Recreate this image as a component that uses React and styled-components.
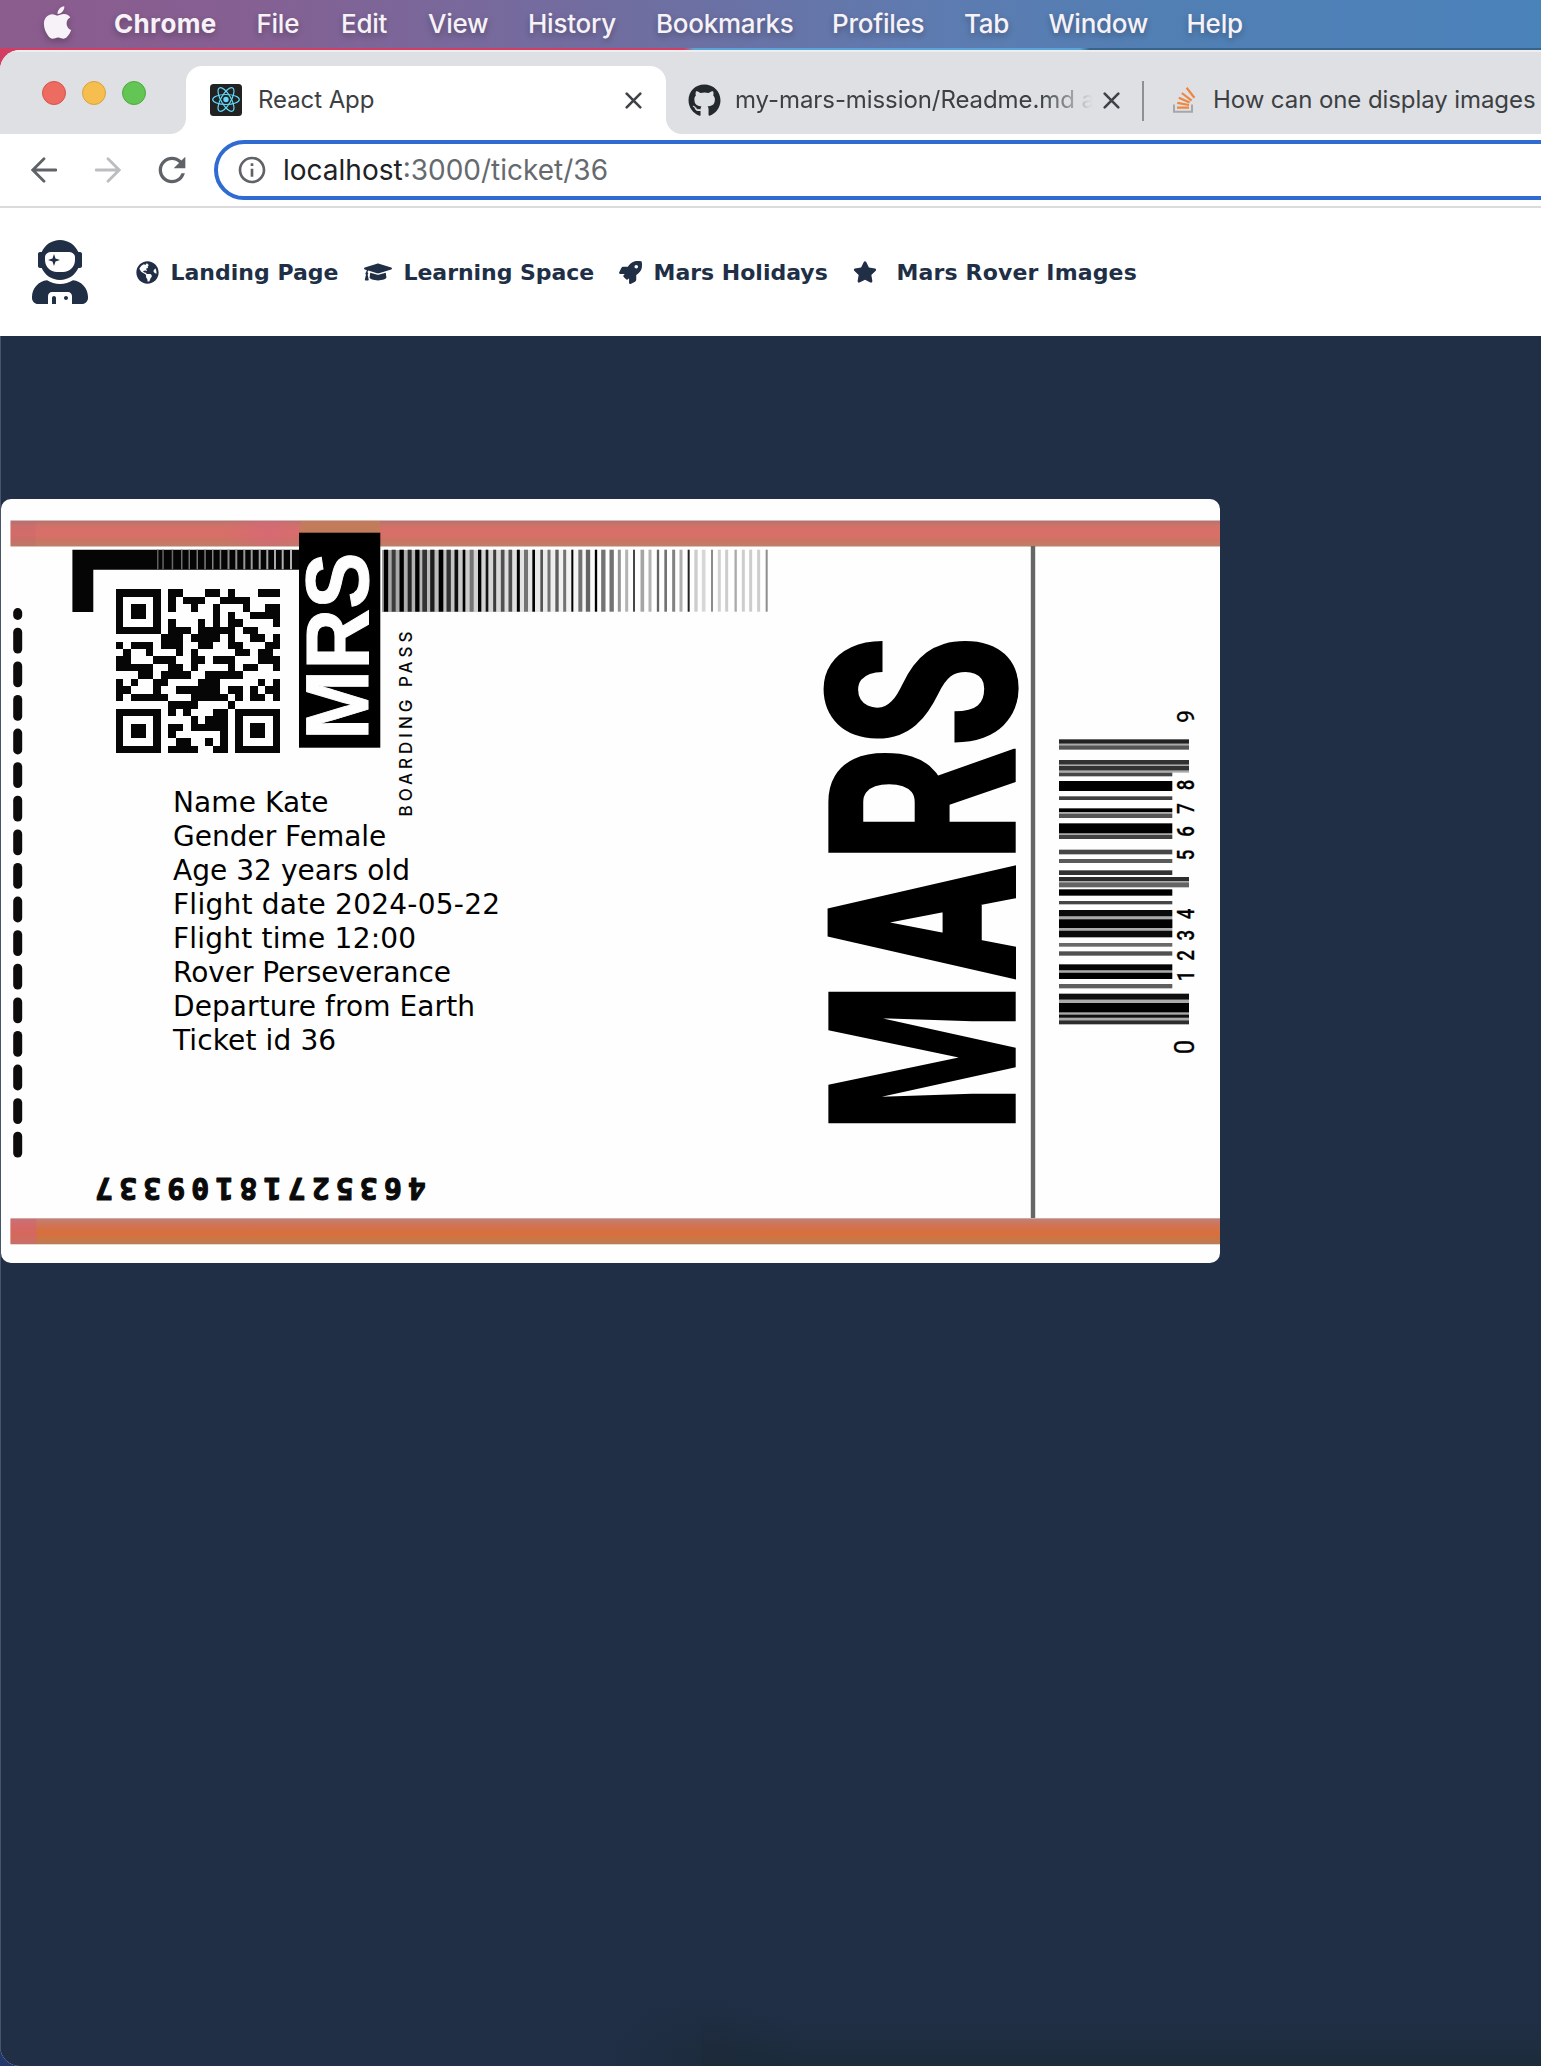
import React from "react";
import styled, { createGlobalStyle, css } from "styled-components";
import {
  FaApple,
  FaGithub,
  FaGlobeAmericas,
  FaGraduationCap,
  FaRocket,
  FaStar,
  FaUserAstronaut,
} from "react-icons/fa";
import { MdInfoOutline, MdRefresh } from "react-icons/md";

const navy = "#202f46";
const systemFont = `Inter, Roboto, "Liberation Sans", sans-serif`;
const pageFont = `Verdana, "DejaVu Sans", sans-serif`;

const GlobalStyle = createGlobalStyle`
  *, *::before, *::after { box-sizing: border-box; }
  html, body { margin: 0; padding: 0; }
  body { width: 1541px; height: 2066px; overflow: hidden; }
  svg { display: block; flex: none; }
`;

/* ---------- desktop ---------- */

const Desktop = styled.div`
  display: flex;
  flex-direction: column;
  width: 1541px;
  height: 2066px;
  background: linear-gradient(90deg, #d03f63 0 684px, #5ba4d6 694px 1080px, #36648a 1090px) top / 100% 90px no-repeat, #22376b;
`;

const MenuBar = styled.div`
  display: flex;
  align-items: center;
  flex: none;
  height: 48px;
  margin-bottom: 2px;
  padding: 0 0 2px 39px;
  background: linear-gradient(90deg, #8b5c8e 0, #865f92 230px, #79689b 450px, #6c70a3 700px, #5e7bb0 930px, #527fb4 1150px, #4a82ba 1541px);
  color: #f6f2f7;
  font-family: ${systemFont};
  font-size: 26px;
  text-shadow: 0 3px 6px rgba(0, 0, 0, 0.28);
`;

const AppleMark = styled(FaApple)`
  width: 37px;
  height: 37px;
  margin: -2px 38px 0 0;
  filter: drop-shadow(0 3px 3px rgba(0, 0, 0, 0.25));
`;

const MenuItem = styled.span`
  width: ${(p) => p.$width}px;
  flex: none;
  font-weight: ${(p) => (p.$bold ? 700 : 500)};
  letter-spacing: ${(p) => (p.$bold ? 0.35 : -0.25)}px;
  white-space: nowrap;
`;

/* ---------- browser window ---------- */

const Window = styled.div`
  display: flex;
  flex-direction: column;
  flex: 1;
  overflow: hidden;
  border-radius: 20px 0 0 20px;
  background: #fff;
`;

const TabStrip = styled.div`
  display: flex;
  align-items: flex-end;
  flex: none;
  height: 84px;
  background: #dfe0e4;
  box-shadow: inset 0 2px 0 #eeeef1;
`;

const TrafficLights = styled.div`
  display: flex;
  align-items: center;
  flex: none;
  gap: 16px;
  width: 186px;
  height: 84px;
  padding: 2px 0 0 42px;
`;

const Light = styled.span`
  width: 24px;
  height: 24px;
  border: 1px solid ${(p) => p.$edge};
  border-radius: 50%;
  background: ${(p) => p.$fill};
`;

const Tab = styled.div`
  position: relative;
  display: flex;
  align-items: center;
  flex: none;
  width: ${(p) => p.$width}px;
  height: 68px;
  padding: 0 ${(p) => p.$end ?? 24}px 0 ${(p) => p.$inset}px;
  color: #3c4043;
  font-family: ${systemFont};
  font-size: 24px;
  letter-spacing: -0.08px;
  ${(p) =>
    p.$active &&
    css`
      background: #fff;
      border-radius: 16px 16px 0 0;
      &::before,
      &::after {
        content: "";
        position: absolute;
        bottom: 0;
        width: 16px;
        height: 16px;
      }
      &::before {
        left: -16px;
        background: radial-gradient(circle at 0 0, transparent 15.5px, #fff 16.5px);
      }
      &::after {
        right: -16px;
        background: radial-gradient(circle at 100% 0, transparent 15.5px, #fff 16.5px);
      }
    `}
`;

const TabTitle = styled.span`
  flex: 1;
  min-width: 0;
  margin-left: ${(p) => p.$before}px;
  white-space: nowrap;
  line-height: 40px;
  ${(p) =>
    p.$fade &&
    css`
      mask-image: linear-gradient(90deg, #000 calc(100% - 62px), transparent calc(100% - 10px));
    `}
`;

const TabDivider = styled.span`
  flex: none;
  width: 2px;
  height: 40px;
  margin-bottom: 13px;
  background: #8e9094;
`;

const Toolbar = styled.div`
  display: flex;
  align-items: center;
  flex: none;
  height: 74px;
  padding-left: 31px;
  border-bottom: 2px solid #dbdbdd;
  background: #fff;
`;

const ArrowIcon = styled.svg`
  width: 26px;
  height: 26px;
  margin-right: ${(p) => p.$after}px;
  color: ${(p) => p.$color};
`;

const ReloadIcon = styled(MdRefresh)`
  width: 40px;
  height: 40px;
  margin-right: 22px;
  color: #5f6368;
`;

const AddressBar = styled.div`
  display: flex;
  align-items: center;
  flex: none;
  width: 1400px;
  height: 60px;
  padding-left: 18px;
  border: 4px solid #2f6bd0;
  border-radius: 30px;
  color: #666a6e;
  font-family: ${systemFont};
  font-size: 28px;
`;

const InfoIcon = styled(MdInfoOutline)`
  width: 32px;
  height: 32px;
  margin-right: 15px;
  color: #5f6368;
`;

const Host = styled.span`
  color: #202124;
`;

/* ---------- site ---------- */

const SiteNav = styled.nav`
  display: flex;
  align-items: center;
  flex: none;
  height: 128px;
  padding-left: 28px;
  background: #fff;
  color: ${navy};
`;

const Astronaut = styled(FaUserAstronaut)`
  width: 64px;
  height: 64px;
  margin-right: 43.5px;
`;

const NavLink = styled.a`
  display: flex;
  align-items: center;
  gap: ${(p) => p.$gap}px;
  width: ${(p) => p.$width}px;
`;

const NavLabel = styled.span`
  padding-top: 2px;
  font: 700 22px / 28px ${pageFont};
  letter-spacing: ${(p) => p.$tracking || 0}px;
  white-space: nowrap;
`;

const Page = styled.main`
  flex: 1;
  padding-top: 163px;
  border-left: 1px solid #46566a;
  background: radial-gradient(ellipse 110px 80px at 700px 100%, rgba(26, 40, 54, 0.55), transparent) no-repeat, linear-gradient(0deg, #1c2b3b 0, #1e2d41 26px, rgba(32, 47, 70, 0) 54px) 700px 0 / 900px 100% no-repeat, ${navy};
`;

const Ticket = styled.section`
  position: relative;
  width: 1219px;
  height: 764px;
  overflow: hidden;
  border-radius: 10px;
  background: #fefefe;
`;

const TicketArt = styled.svg`
  width: 1219px;
  height: 764px;
`;

const Passenger = styled.div`
  position: absolute;
  left: 172px;
  top: 287px;
  color: #000;
  font: 28px / 34px ${pageFont};
`;

const Detail = styled.div`
  height: 34px;
  white-space: nowrap;
  letter-spacing: ${(p) => p.$tracking || 0}px;
`;

/* ---------- drawings ---------- */

const ReactLogo = () => (
  <svg width="32" height="32" viewBox="0 0 32 32">
    <rect width="32" height="32" rx="3.5" fill="#222" />
    <g fill="none" stroke="#61dafb" strokeWidth="1.2">
      <ellipse cx="16" cy="15.5" rx="13.3" ry="5" />
      <ellipse cx="16" cy="15.5" rx="13.3" ry="5" transform="rotate(60 16 15.5)" />
      <ellipse cx="16" cy="15.5" rx="13.3" ry="5" transform="rotate(120 16 15.5)" />
    </g>
    <circle cx="16" cy="15.5" r="2.7" fill="#61dafb" />
  </svg>
);

const StackLogo = () => (
  <svg width="24" height="28" viewBox="0 0 24 28">
    <path d="M2 18.5V25.8H20V18.5" fill="none" stroke="#a5a7aa" strokeWidth="2" />
    <g stroke="#ee8640" strokeWidth="2.2">
      <path d="M5 21.6H17" />
      <path d="M5.3 16.8L17 19" />
      <path d="M6.8 11.8L17.6 16.6" />
      <path d="M9.8 7L19.6 14.6" />
      <path d="M14.6 1.8L22.4 11.8" />
    </g>
  </svg>
);

const CloseIcon = () => (
  <svg width="17" height="17" viewBox="0 0 17 17">
    <path d="M1.7 1.7L15.3 15.3M15.3 1.7L1.7 15.3" stroke="#3f4246" strokeWidth="2.6" strokeLinecap="round" />
  </svg>
);

const Arrow = ({ forward, after, color }) => (
  <ArrowIcon viewBox="0 0 26 26" $after={after} $color={color}>
    <path
      d="M25 13H2M13 1.8L1.8 13L13 24.2"
      transform={forward ? "rotate(180 13 13)" : undefined}
      fill="none"
      stroke="currentColor"
      strokeWidth="2.8"
      strokeLinecap="round"
    />
  </ArrowIcon>
);

const qrRows = [
  "######.##...##.#...###",
  "#....#.#.###..####....",
  "#.##.#.#..#..#...#..##",
  "#.##.#.......#.#..####",
  "#....#.#...#.#.##....#",
  "######.###.#####.##...",
  "......###.####.#..##.#",
  "#.###.###..##..##...##",
  ".#..#...#.#.....##.##.",
  "##...###..##.###...###",
  "#####..##.#....#.##..#",
  "...##.####..#####.....",
  "#.#..##....###.....#.#",
  "##...#..######.##.#.##",
  "#.#####...#####.#.##.#",
  ".......####....#......",
  "######.#.#...##.......",
  "#....#....#.###.######",
  "#.##.#.##.#####.#....#",
  "#.##.#.#......#.#.##.#",
  "#....#..##..#.#.#.##.#",
  "######.####..##.######",
];

const QrCode = () => (
  <g fill="#060606" shapeRendering="crispEdges">
    {qrRows.map((row, y) =>
      (row.match(/#+|\.+/g) || []).reduce(
        (acc, run) => {
          if (run[0] === "#")
            acc.cells.push(
              <rect key={`${y}-${acc.x}`} x={115.7 + acc.x * 7.48} y={589.4 + y * 7.45} width={run.length * 7.48} height="7.46" />
            );
          acc.x += run.length;
          return acc;
        },
        { x: 0, cells: [] }
      ).cells
    )}
    <g transform={`translate(${115.7 + 16 * 7.48} ${589.4 + 16 * 7.45})`}>
      <rect width="44.9" height="44.7" />
      <rect x="7.5" y="7.5" width="29.9" height="29.8" fill="#fefefe" />
      <rect x="15" y="14.9" width="14.9" height="14.9" />
    </g>
  </g>
);

/* [offset, width, grey level] of each stripe right of the MRS block */
const stripes = [
  [18, 13, 0], [41, 12, 60], [65, 13, 0], [89, 12, 40], [112, 13, 0], [134, 14, 50], [157, 13, 30], [183, 14, 0],
  [206, 13, 50], [229, 11, 15], [252, 8, 0], [275, 12, 115], [299, 10, 0], [321, 8, 20], [344, 9, 60], [368, 11, 80],
  [391, 11, 80], [415, 9, 0], [438, 12, 115], [461, 8, 0], [485, 8, 85], [507, 9, 115], [531, 10, 95], [554, 9, 115],
  [577, 6, 0], [601, 12, 115], [624, 13, 100], [648, 7, 0], [670, 13, 115], [695, 13, 115], [718, 9, 150], [740, 9, 180],
  [762, 6, 70], [787, 11, 165], [810, 9, 180], [834, 7, 100], [857, 8, 115], [881, 9, 130], [903, 9, 175], [926, 6, 35],
  [948, 10, 205], [971, 11, 215], [996, 6, 140], [1018, 9, 210], [1040, 9, 205], [1067, 7, 170], [1090, 9, 205],
  [1112, 9, 205], [1136, 9, 205], [1160, 6, 140],
];

/* [top, bottom, grey level, long] of each bar in the stub barcode */
const bars = [
  [118, 131, 34, 1], [136, 149, 85, 1], [180, 194, 50, 1], [198, 211, 50, 1], [218, 229, 70], [243, 273, 0],
  [289, 300, 65], [325, 336, 0], [341, 354, 85], [370, 400, 0], [405, 417, 65], [449, 463, 70], [477, 489, 90],
  [511, 525, 50], [531, 543, 45, 1], [547, 562, 100, 1], [568, 587, 0], [603, 613, 70], [630, 649, 10],
  [658, 684, 0], [692, 712, 10], [729, 740, 105], [754, 767, 80], [793, 811, 5], [818, 837, 0], [852, 865, 95],
  [881, 899, 15, 1], [909, 937, 0, 1], [944, 953, 15, 1], [961, 973, 45, 1],
];
const barGaps = [
  [195, 218, 1], [649, 692], [400, 405], [899, 961, 1], [543, 547, 1], [336, 341], [811, 818], [131, 136, 1],
];

const stubDigits = [
  ["9", 716.5, 20], ["8", 785, 16], ["7", 808.5, 16], ["6", 831.5, 16], ["5", 855, 16],
  ["4", 914, 16], ["3", 935.3, 16], ["2", 955.5, 16], ["1", 976, 16], ["0", 1047, 20],
];

/* baseline start, horizontal scale, left bearing, size and extra weight of each letter */
const marsLetters = [
  { letter: "M", base: 1015.7, y: 1122.7, scale: 0.65, bearing: 15, size: 263.5, stroke: 0 },
  { letter: "A", base: 1013.5, y: 976.6, scale: 0.62, bearing: 0.5, size: 258, stroke: 5 },
  { letter: "R", base: 1015.7, y: 852.3, scale: 0.69, bearing: 15, size: 263.5, stroke: 0 },
  { letter: "S", base: 1016, y: 743, scale: 0.677, bearing: 7.5, size: 267, stroke: 0 },
];

const grey = (v) => `rgb(${v},${v},${v})`;

const BoardingPass = () => (
  <TicketArt viewBox="1 499 1219 764">
    <defs>
      <linearGradient id="coral" x1="0" y1="0" x2="0" y2="1">
        <stop offset="0" stopColor="#b07470" />
        <stop offset="0.18" stopColor="#cf7269" />
        <stop offset="0.5" stopColor="#db6e68" />
        <stop offset="0.75" stopColor="#cd7363" />
        <stop offset="1" stopColor="#bb8068" />
      </linearGradient>
      <linearGradient id="orange" x1="0" y1="0" x2="0" y2="1">
        <stop offset="0" stopColor="#bf8378" />
        <stop offset="0.25" stopColor="#cf7457" />
        <stop offset="0.55" stopColor="#d96f3b" />
        <stop offset="0.8" stopColor="#cb7646" />
        <stop offset="1" stopColor="#b87d58" />
      </linearGradient>
      <linearGradient id="haze">
        <stop offset="0" stopColor="#a2a2a2" />
        <stop offset="0.4" stopColor="#cfcfcf" />
        <stop offset="0.75" stopColor="#efefef" />
        <stop offset="1" stopColor="#fefefe" />
      </linearGradient>
      <linearGradient id="blush">
        <stop offset="0" stopColor="#d4667a" stopOpacity="0" />
        <stop offset="0.6" stopColor="#d4667a" stopOpacity="0.6" />
        <stop offset="1" stopColor="#d4667a" stopOpacity="0.2" />
      </linearGradient>
    </defs>

    <rect x="10.5" y="520.5" width="1210" height="26" fill="url(#coral)" />
    <rect x="10.5" y="522" width="25" height="24" fill="#b5607c" opacity="0.18" />
    <rect x="222" y="521" width="77" height="25" fill="url(#blush)" />
    <rect x="301" y="521" width="79" height="13" fill="#c27c5c" />
    <rect x="10.5" y="1218.3" width="1210" height="26" fill="url(#orange)" />
    <rect x="10.5" y="1219" width="26" height="25" fill="#d4607c" opacity="0.5" />

    <g stroke="#0c0c0c" strokeWidth="9" strokeLinecap="round">
      <path d="M17.7 612.6V615.4" />
      {Array.from({ length: 16 }, (_, i) => (
        <path key={i} d={`M17.7 ${632.3 + i * 33.6}v16.8`} />
      ))}
    </g>

    <path d="M72.4 549.7H300V569.8H93.3V612H72.4Z" fill="#050505" />
    {[157, 162.3, 171.7, 181, 188.5, 196.5, 204.3, 212, 219.7, 227.5, 235.3, 243.3, 250.7, 258.7, 266.3, 274, 281.7, 290].map((x, i) => (
      <rect key={x} x={x} y="549.7" width={i > 8 ? 2 : 1.5} height="19.6" fill={grey(95 + i * 5)} />
    ))}
    <rect x="382" y="550" width="230" height="62" fill="url(#haze)" />
    {stripes.map(([x, w, v]) => (
      <rect key={x} x={380 + (x - w / 2) / 3} y="549.7" width={w / 3} height="62" fill={grey(v)} />
    ))}

    <QrCode />

    <rect x="299" y="532.7" width="81.3" height="215" fill="#000" />
    <text
      transform="translate(368 740) rotate(-90)"
      fontFamily={`"Liberation Sans", Arial, sans-serif`}
      fontWeight="700"
      fontSize="89.5"
      textLength="187.5"
      lengthAdjust="spacingAndGlyphs"
      fill="#fefefe"
      stroke="#fefefe"
      strokeWidth="1"
    >
      MRS
    </text>
    <text
      transform="translate(412 816.5) rotate(-90)"
      fontFamily="Inter, sans-serif"
      fontWeight="500"
      fontSize="17"
      textLength="185"
      fill="#080808"
    >
      BOARDING PASS
    </text>

    {marsLetters.map(({ letter, base, y, scale, bearing, size, stroke }) => (
      <text
        key={letter}
        transform={`translate(${base} ${y}) rotate(-90) scale(${scale} 1)`}
        x={-bearing}
        fontFamily="Roboto, sans-serif"
        fontWeight="900"
        fontSize={size}
        fill="#000"
        stroke="#000"
        strokeWidth={stroke}
      >
        {letter}
      </text>
    ))}

    <rect x="1030.8" y="546" width="4.4" height="672" fill="#666" />

    {barGaps.map(([top, bottom, long]) => (
      <rect key={top} x="1059" y={700 + top / 3} width={long ? 130 : 113.3} height={(bottom - top) / 3} fill="#aaa" />
    ))}
    {bars.map(([top, bottom, v, long]) => (
      <rect key={top} x="1059" y={700 + top / 3} width={long ? 130 : 113.3} height={(bottom - top) / 3} fill={grey(v)} />
    ))}
    {stubDigits.map(([digit, y, size]) => (
      <text
        key={digit}
        transform={`translate(1194 ${y}) rotate(-90) scale(${size === 16 ? 0.78 : 0.96} 1)`}
        textAnchor="middle"
        fontFamily="Roboto, sans-serif"
        fontWeight={size === 16 ? 500 : 400}
        fontSize={digit === "0" ? 27 : 24}
        fill="#000"
        stroke="#000"
        strokeWidth="0.3"
      >
        {digit}
      </text>
    ))}

    <text
      transform="translate(426 1177.8) rotate(180)"
      fontFamily={`"DejaVu Sans Mono", monospace`}
      fontWeight="700"
      fontSize="30"
      textLength="331"
      fill="#0a0a0a"
      stroke="#0a0a0a"
      strokeWidth="1.1"
      strokeLinejoin="round"
    >
      46352718109337
    </text>
  </TicketArt>
);

/* ---------- data ---------- */

const menus = [
  ["Chrome", 142.5, true],
  ["File", 84.5],
  ["Edit", 87],
  ["View", 100],
  ["History", 128],
  ["Bookmarks", 176],
  ["Profiles", 132],
  ["Tab", 84.5],
  ["Window", 138],
  ["Help", 60],
];

const details = [
  ["Name Kate", 0.1],
  ["Gender Female", 0],
  ["Age 32 years old", 0.05],
  ["Flight date 2024-05-22", 0.25],
  ["Flight time 12:00", 0.2],
  ["Rover Perseverance", -0.05],
  ["Departure from Earth", 0.1],
  ["Ticket id 36", 0.12],
];

export default function App() {
  return (
    <>
      <GlobalStyle />
      <Desktop>
        <MenuBar>
          <AppleMark />
          {menus.map(([label, width, bold]) => (
            <MenuItem key={label} $width={width} $bold={bold}>
              {label}
            </MenuItem>
          ))}
        </MenuBar>

        <Window>
          <TabStrip>
            <TrafficLights>
              <Light $fill="#ed6b60" $edge="#d65349" />
              <Light $fill="#f5be4f" $edge="#d9a23c" />
              <Light $fill="#62c554" $edge="#4dab3f" />
            </TrafficLights>
            <Tab $active $width={480} $inset={24}>
              <ReactLogo />
              <TabTitle $before={16}>React App</TabTitle>
              <CloseIcon />
            </Tab>
            <Tab $width={476} $inset={22} $end={22}>
              <FaGithub size={33} color="#24292e" />
              <TabTitle $before={14} $fade>
                my-mars-mission/Readme.md a
              </TabTitle>
              <CloseIcon />
            </Tab>
            <TabDivider />
            <Tab $width={397} $inset={28} $end={0}>
              <StackLogo />
              <TabTitle $before={17}>How can one display images</TabTitle>
            </Tab>
          </TabStrip>

          <Toolbar>
            <Arrow after={38} color="#5f6368" />
            <Arrow forward after={31} color="#bbbdbf" />
            <ReloadIcon />
            <AddressBar>
              <InfoIcon />
              <Host>localhost</Host>:3000/ticket/36
            </AddressBar>
          </Toolbar>

          <SiteNav>
            <Astronaut />
            <NavLink $width={228} $gap={12}>
              <FaGlobeAmericas size={23} />
              <NavLabel>Landing Page</NavLabel>
            </NavLink>
            <NavLink $width={255} $gap={12}>
              <FaGraduationCap size={28} />
              <NavLabel $tracking={-0.05}>Learning Space</NavLabel>
            </NavLink>
            <NavLink $width={234} $gap={12}>
              <FaRocket size={23} />
              <NavLabel>Mars Holidays</NavLabel>
            </NavLink>
            <NavLink $width={300} $gap={20}>
              <FaStar size={24} />
              <NavLabel $tracking={0.15}>Mars Rover Images</NavLabel>
            </NavLink>
          </SiteNav>

          <Page>
            <Ticket>
              <BoardingPass />
              <Passenger>
                {details.map(([text, tracking]) => (
                  <Detail key={text} $tracking={tracking}>
                    {text}
                  </Detail>
                ))}
              </Passenger>
            </Ticket>
          </Page>
        </Window>
      </Desktop>
    </>
  );
}
